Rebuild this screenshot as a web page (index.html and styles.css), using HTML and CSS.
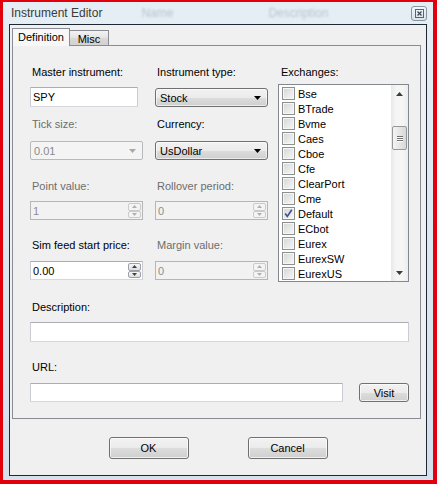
FILE: index.html
```html
<!DOCTYPE html>
<html>
<head>
<meta charset="utf-8">
<link rel="stylesheet" href="styles.css">
</head>
<body>
<div class="window">
  <div class="titlebar">
    <span class="title">Instrument Editor</span>
    <span class="ghost g1">Name</span>
    <span class="ghost g2">Description</span>
    <span class="close"><svg width="9" height="9" viewBox="0 0 9 9"><rect x="0.5" y="0.5" width="8" height="8" fill="none" stroke="#5a6470"/><path d="M2.5 2.5L6.5 6.5M6.5 2.5L2.5 6.5" stroke="#3c4650" stroke-width="1.2"/></svg></span>
  </div>
  <div class="client">
    <div class="tabs">
      <div class="tab active">Definition</div>
      <div class="tab inactive">Misc</div>
    </div>
    <div class="page">
      <div class="grid">
        <div class="field">
          <div class="lbl">Master instrument:</div>
          <div class="tb spy r1">SPY</div>
        </div>
        <div class="field">
          <div class="lbl">Instrument type:</div>
          <div class="combo r1b"><span>Stock</span><svg width="7" height="4" viewBox="0 0 7 4"><path d="M0 0h7L3.5 4z" fill="#000"/></svg></div>
        </div>
        <div class="field exch">
          <div class="lbl lbl3">Exchanges:</div>
          <div class="list">
            <div class="items">
              <div class="item"><span class="cb"></span>Bse</div>
              <div class="item"><span class="cb"></span>BTrade</div>
              <div class="item"><span class="cb"></span>Bvme</div>
              <div class="item"><span class="cb"></span>Caes</div>
              <div class="item"><span class="cb"></span>Cboe</div>
              <div class="item"><span class="cb"></span>Cfe</div>
              <div class="item"><span class="cb"></span>ClearPort</div>
              <div class="item"><span class="cb"></span>Cme</div>
              <div class="item"><span class="cb"><svg width="11" height="11" viewBox="0 0 11 11"><path d="M2.2 5.6L4.3 8.4L8.8 1.8" fill="none" stroke="#3d5288" stroke-width="1.7"/></svg></span>Default</div>
              <div class="item"><span class="cb"></span>ECbot</div>
              <div class="item"><span class="cb"></span>Eurex</div>
              <div class="item"><span class="cb"></span>EurexSW</div>
              <div class="item"><span class="cb"></span>EurexUS</div>
            </div>
            <div class="sb">
              <div class="sbbtn"><svg width="7" height="4" viewBox="0 0 7 4"><path d="M0 4h7L3.5 0z" fill="#3c3c3c"/></svg></div>
              <div class="thumb"><span></span><span></span><span></span></div>
              <div class="sbfill"></div>
              <div class="sbbtn"><svg width="7" height="4" viewBox="0 0 7 4"><path d="M0 0h7L3.5 4z" fill="#3c3c3c"/></svg></div>
            </div>
          </div>
        </div>

        <div class="field">
          <div class="lbl dis">Tick size:</div>
          <div class="combo disabled r2"><span>0.01</span><svg width="7" height="4" viewBox="0 0 7 4"><path d="M0 0h7L3.5 4z" fill="#a8a8a8"/></svg></div>
        </div>
        <div class="field">
          <div class="lbl">Currency:</div>
          <div class="combo r2"><span>UsDollar</span><svg width="7" height="4" viewBox="0 0 7 4"><path d="M0 0h7L3.5 4z" fill="#000"/></svg></div>
        </div>

        <div class="field">
          <div class="lbl dis">Point value:</div>
          <div class="spin disabled r3"><span class="val">1</span><span class="arrows"><span><svg width="5" height="3" viewBox="0 0 5 3"><path d="M0 3h5L2.5 0z" fill="#b0b0b0"/></svg></span><span><svg width="5" height="3" viewBox="0 0 5 3"><path d="M0 0h5L2.5 3z" fill="#b0b0b0"/></svg></span></span></div>
        </div>
        <div class="field">
          <div class="lbl dis">Rollover period:</div>
          <div class="spin disabled r3"><span class="val">0</span><span class="arrows"><span><svg width="5" height="3" viewBox="0 0 5 3"><path d="M0 3h5L2.5 0z" fill="#b0b0b0"/></svg></span><span><svg width="5" height="3" viewBox="0 0 5 3"><path d="M0 0h5L2.5 3z" fill="#b0b0b0"/></svg></span></span></div>
        </div>

        <div class="field">
          <div class="lbl">Sim feed start price:</div>
          <div class="spin r4"><span class="val">0.00</span><span class="arrows"><span><svg width="5" height="3" viewBox="0 0 5 3"><path d="M0 3h5L2.5 0z" fill="#404040"/></svg></span><span><svg width="5" height="3" viewBox="0 0 5 3"><path d="M0 0h5L2.5 3z" fill="#404040"/></svg></span></span></div>
        </div>
        <div class="field">
          <div class="lbl dis">Margin value:</div>
          <div class="spin disabled r4"><span class="val">0</span><span class="arrows"><span><svg width="5" height="3" viewBox="0 0 5 3"><path d="M0 3h5L2.5 0z" fill="#b0b0b0"/></svg></span><span><svg width="5" height="3" viewBox="0 0 5 3"><path d="M0 0h5L2.5 3z" fill="#b0b0b0"/></svg></span></span></div>
        </div>
      </div>

      <div class="desc">
        <div class="lbl">Description:</div>
        <div class="tb wide"></div>
      </div>
      <div class="url">
        <div class="lbl">URL:</div>
        <div class="urlrow">
          <div class="tb urlbox"></div>
          <div class="btn visit">Visit</div>
        </div>
      </div>
    </div>
    <div class="buttons">
      <div class="btn big">OK</div>
      <div class="btn big">Cancel</div>
    </div>
  </div>
</div>
</body>
</html>
```
FILE: styles.css
```css
body {
  margin: 0;
  font-family: "Liberation Sans", Arial, sans-serif;
  font-size: 11px;
  color: #000;
}
.window {
  width: 437px;
  height: 484px;
  box-sizing: border-box;
  border-style: solid;
  border-color: #e1000c;
  border-width: 2px 4px 4px 3px;
  background: linear-gradient(#e6eef5, #d4e0ec);
  display: flex;
  flex-direction: column;
}
.titlebar {
  height: 22px;
  flex: none;
  display: flex;
  align-items: center;
  padding: 0 6px 0 8px;
}
.title {
  font-size: 12px;
  color: #3a3a3a;
}
.ghost {
  font-size: 12px;
  color: rgba(80, 100, 120, 0.3);
  filter: blur(1.3px);
}
.g1 { margin-left: 39px; }
.g2 { margin-left: 95px; }
.close {
  margin-left: auto;
  width: 16px;
  height: 15px;
  box-sizing: border-box;
  border: 1px solid #8995a2;
  border-radius: 3px;
  background: linear-gradient(#f3f6f9, #dbe3eb);
  display: flex;
  align-items: center;
  justify-content: center;
}
.client {
  margin: 0 6px;
  height: 452px;
  box-sizing: border-box;
  border: 1px solid #1e2834;
  background: #f0f0f0;
  padding: 3px 5px 0 2px;
}
.tabs {
  display: flex;
  align-items: flex-end;
  height: 17px;
}
.tab {
  box-sizing: border-box;
  border: 1px solid #898c95;
  border-bottom: none;
  display: flex;
  align-items: center;
  justify-content: center;
}
.tab.active {
  position: relative;
  z-index: 1;
  width: 58px;
  height: 18px;
  margin-bottom: -1px;
  background: #f7f7f7;
  padding-bottom: 1px;
}
.tab.inactive {
  width: 39px;
  height: 15px;
  border-left: none;
  background: linear-gradient(#f3f3f3, #e3e3e3 50%, #d8d8d8 51%, #d2d2d2);
  padding-top: 2px;
}
.page {
  width: 409px;
  height: 374px;
  box-sizing: border-box;
  border: 1px solid #898c95;
  background: #f0f0f0;
  padding: 19px 11px 0 17px;
}
.grid {
  display: grid;
  grid-template-columns: 125px 123px 131px;
  grid-template-rows: 52px 62px 59px 42px;
}
.field {
  display: flex;
  flex-direction: column;
  align-items: flex-start;
}
.exch {
  grid-column: 3;
  grid-row: 1 / span 4;
}
.lbl {
  height: 15px;
  line-height: 15px;
  white-space: nowrap;
  padding-left: 2px;
}
.lbl3 { padding-left: 3px; }
.lbl.dis { color: #6d6d6d; }
.r1 { margin-top: 7px; }
.r1b { margin-top: 8px; }
.r2 { margin-top: 9px; }
.r3 { margin-top: 7px; }
.r4 { margin-top: 8px; }

.tb {
  box-sizing: border-box;
  height: 20px;
  border: 1px solid;
  border-color: #abadb3 #c9ccd2 #d5d9de #c9ccd2;
  border-radius: 1px;
  background: #fff;
  padding-left: 2px;
  display: flex;
  align-items: center;
}
.spy { width: 108px; }

.combo {
  box-sizing: border-box;
  width: 113px;
  height: 19px;
  border: 1px solid #707070;
  border-radius: 3px;
  background: linear-gradient(#f2f2f2, #ebebeb 50%, #dddddd 51%, #cfcfcf);
  box-shadow: inset 0 0 0 1px rgba(255,255,255,0.6);
  display: flex;
  align-items: center;
  justify-content: space-between;
  padding: 0 6px 0 4px;
}
.combo.disabled {
  border-color: #b7babd;
  border-radius: 2px;
  background: #f4f4f4;
  box-shadow: none;
  color: #8a8a8a;
  padding-left: 3px;
}

.spin {
  box-sizing: border-box;
  width: 113px;
  height: 19px;
  border: 1px solid;
  border-color: #abadb3 #c9ccd2 #d5d9de #c9ccd2;
  background: #fff;
  display: flex;
  align-items: center;
}
.spin.disabled {
  border-color: #b4b7ba;
  background: #f2f2f2;
  color: #8d8d8d;
}
.val { flex: 1; padding-left: 2px; }
.arrows {
  width: 13px;
  height: 15px;
  margin-right: 1px;
  display: flex;
  flex-direction: column;
}
.arrows span {
  flex: 1;
  box-sizing: border-box;
  border: 1px solid #9ea2a8;
  border-radius: 2px;
  background: linear-gradient(#f6f6f6, #dedede);
  display: flex;
  align-items: center;
  justify-content: center;
}
.spin.disabled .arrows span {
  border-color: #cbcbcb;
  background: #f4f4f4;
}

.list {
  margin-top: 4px;
  width: 131px;
  height: 199px;
  box-sizing: border-box;
  border: 1px solid #828790;
  background: #fff;
  display: flex;
}
.items {
  flex: 1;
  padding: 1px 0 0 3px;
}
.item {
  height: 15px;
  display: flex;
  align-items: center;
  gap: 3px;
  white-space: nowrap;
}
.cb {
  width: 13px;
  height: 13px;
  box-sizing: border-box;
  border: 1px solid #8e8f8f;
  background: linear-gradient(135deg, #d3d5d8, #f8f8f8);
  box-shadow: inset 0 0 0 1px #f6f6f6;
  display: flex;
  align-items: center;
  justify-content: center;
}
.sb {
  width: 17px;
  display: flex;
  flex-direction: column;
  background: linear-gradient(90deg, #e8e8e8, #f5f5f5 30%, #f5f5f5 70%, #ececec);
}
.sbbtn {
  height: 17px;
  display: flex;
  align-items: center;
  justify-content: center;
}
.thumb {
  margin: 24px 1px 0 1px;
  height: 24px;
  box-sizing: border-box;
  border: 1px solid #979797;
  border-radius: 2px;
  background: linear-gradient(90deg, #f4f4f4, #e6e6e6 50%, #d8d8d8);
  display: flex;
  flex-direction: column;
  align-items: center;
  justify-content: center;
  gap: 1px;
}
.thumb span {
  width: 6px;
  height: 1px;
  background: #6e6e6e;
  box-shadow: 0 1px 0 #fff;
}
.sbfill { flex: 1; }

.desc { margin-top: 20px; }
.desc .tb { margin-top: 7px; }
.wide { width: 379px; }
.url { margin-top: 18px; }
.urlrow {
  margin-top: 8px;
  display: flex;
  align-items: flex-start;
}
.urlbox { width: 313px; height: 19px; }

.btn {
  box-sizing: border-box;
  border: 1px solid #707070;
  border-radius: 3px;
  background: linear-gradient(#f2f2f2, #ebebeb 50%, #dddddd 51%, #cfcfcf);
  box-shadow: inset 0 0 0 1px rgba(255,255,255,0.7);
  display: flex;
  align-items: center;
  justify-content: center;
}
.visit {
  margin-left: auto;
  width: 50px;
  height: 19px;
}
.buttons {
  margin: 18px -5px 0 -2px;
  display: flex;
  justify-content: center;
  gap: 59px;
}
.big {
  width: 80px;
  height: 22px;
}
```
